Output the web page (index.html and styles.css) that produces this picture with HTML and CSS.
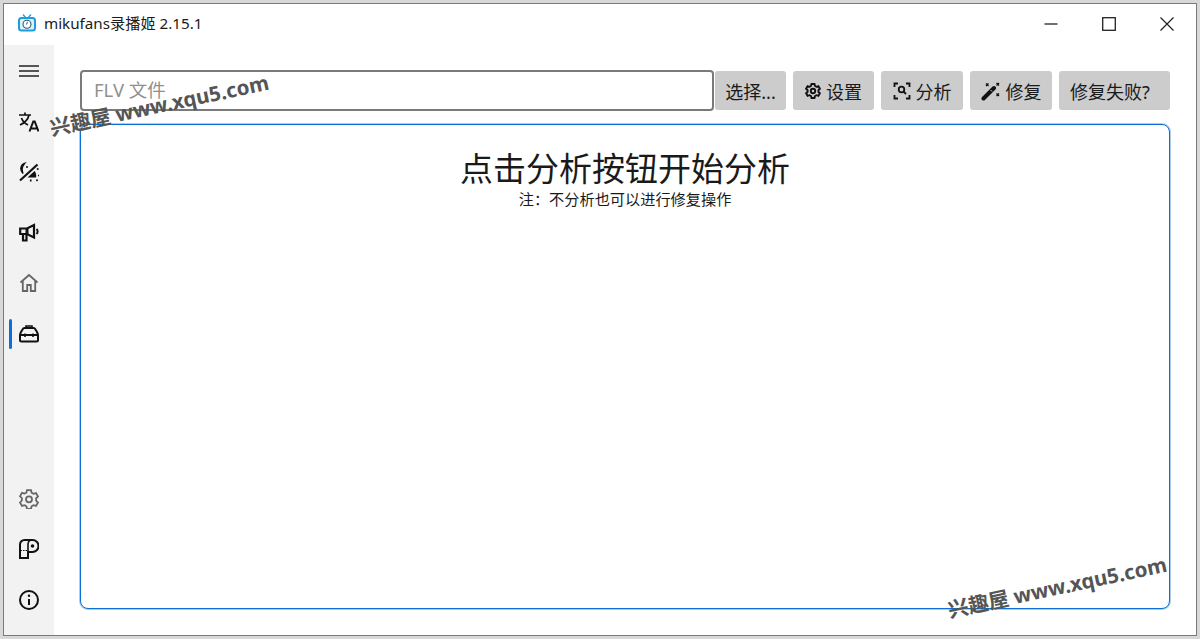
FILE: index.html
```html
<!DOCTYPE html>
<html>

<head>
    <meta charset="UTF-8">
    <link rel="stylesheet" href="styles.css">
    <title>mikufans录播姬 2.15.1</title>
</head>

<body>
    <div class="window">
        <div class="titlebar">
            <svg class="app-icon" viewBox="0 0 18 18" width="18" height="18" fill="none">
                <path d="M5 0.500l3 3.500M13 0.500l-3 3.500" stroke="#2aa3dc" stroke-width="1.400" />
                <rect x="1" y="4" width="16" height="12.500" rx="2.500" fill="#d9f1fb" stroke="#1f9ddb" stroke-width="2" />
                <circle cx="9" cy="10.200" r="4" fill="#fff" stroke="#2c5a70" stroke-width="1.100" />
                <path d="M9.500 7.800L8.500 10.500" stroke="#2c5a70" stroke-width="1" />
            </svg>
            <span class="app-title">mikufans录播姬 2.15.1</span>
            <div class="window-controls">
                <div class="control">
                    <svg viewBox="0 0 14 14" width="14" height="14"><path d="M0.500 7h13" stroke="#222" stroke-width="1.300" /></svg>
                </div>
                <div class="control">
                    <svg viewBox="0 0 14 14" width="14" height="14"><rect x="0.700" y="0.700" width="12.600" height="12.600" fill="none" stroke="#222" stroke-width="1.300" /></svg>
                </div>
                <div class="control">
                    <svg viewBox="0 0 14 14" width="14" height="14"><path d="M0.500 0.500l13 13M13.500 0.500l-13 13" stroke="#222" stroke-width="1.200" /></svg>
                </div>
            </div>
        </div>

        <div class="body">
            <div class="sidebar">
                <div class="nav-group">
                    <div class="nav-item">
                        <svg viewBox="0 0 20 20" width="20" height="20"><path d="M0 5h20M0 10h20M0 15h20" stroke="#222" stroke-width="1.400" /></svg>
                    </div>
                    <div class="nav-item">
                        <svg viewBox="0 0 20 20" width="20" height="20" fill="none" stroke="#111" stroke-width="1.700">
                            <path d="M0 3h12M6 0.500V3M10 3c-1 4.500-4.500 8-9 10M2.500 6c1 3 3.500 5.500 6.500 7" />
                            <path d="M10.500 19.500l3.800-10h1.400l3.800 10M11.800 16.500h6.400" stroke-width="2" />
                        </svg>
                    </div>
                    <div class="nav-item">
                        <svg viewBox="0 0 20 20" width="20" height="20" fill="none" stroke="#111">
                            <path d="M1 18.500L18.500 2.500" stroke-width="2.200" />
                            <path d="M5.500 1.500C1.500 3 0.500 8 4 11.500C2.500 8 3 4.500 5.500 1.500z" stroke-width="1.400" fill="#111" />
                            <circle cx="8" cy="5" r="1" fill="#111" stroke="none" />
                            <path d="M8.500 15.500l7-6.500c1.500 1.500 2 4 1.500 6.500z" fill="#111" stroke="none" />
                            <path d="M18 7.500l1.500-1M19 13.500h1M17.500 17.500l1 1.500M12 17.500l-.5 2" stroke-width="1.600" />
                        </svg>
                    </div>
                </div>
                <div class="nav-group nav-pages">
                    <div class="nav-item">
                        <svg viewBox="0 0 20 20" width="20" height="20" fill="none" stroke="#111" stroke-width="2.200">
                            <path d="M1.200 5.500h6.800l7-3.500v12.500l-7-3.500H1.200z" />
                            <path d="M8 5.500v5.500" stroke-width="3" />
                            <path d="M4 11v6.500h3.500V11" />
                            <path d="M17.500 6c1.500 1.200 1.500 3.800 0 5" stroke-width="2" />
                        </svg>
                    </div>
                    <div class="nav-item">
                        <svg viewBox="0 0 20 20" width="20" height="20" fill="none" stroke="#666" stroke-width="1.800">
                            <path d="M1.500 9.500L10 2l8.500 7.500M3.800 8v10h4.400v-6h3.600v6h4.400V8" />
                        </svg>
                    </div>
                    <div class="nav-item nav-selected">
                        <svg viewBox="0 0 20 20" width="20" height="20" fill="none" stroke="#111" stroke-width="2">
                            <path d="M1 11.500c0-1 .3-2 1-3.500l1.500-2.500c.5-1 1-1.500 2-1.500h9c1 0 1.500.5 2 1.500L18 8c.7 1.500 1 2.500 1 3.500V16a1.500 1.500 0 0 1-1.500 1.500h-15A1.500 1.500 0 0 1 1 16z" />
                            <path d="M1 11h18" />
                            <path d="M7 4V2h6v2" stroke-width="1.600" />
                            <path d="M6 9.500v3.500M14 9.500v3.500" stroke-width="1.600" />
                        </svg>
                    </div>
                </div>
                <div class="nav-group nav-bottom">
                    <div class="nav-item">
                        <svg viewBox="0 0 20 20" width="20" height="20" fill="none" stroke="#666" stroke-width="1.800">
                            <path d="M8 1.200h4l.6 2.500 1.900 1.100 2.500-.7 2 3.400-1.900 1.800v2.400l1.900 1.800-2 3.400-2.500-.7-1.900 1.100-.6 2.500H8l-.6-2.500-1.900-1.100-2.500.7-2-3.400L2.900 11.500V9.100L1 7.300l2-3.400 2.500.7L7.400 3.700z" />
                            <circle cx="10" cy="10.300" r="3" />
                        </svg>
                    </div>
                    <div class="nav-item">
                        <svg viewBox="0 0 20 20" width="20" height="20" fill="none" stroke="#111" stroke-width="2">
                            <path d="M5.500 1h8a5.500 5.500 0 0 1 0 12H9v6H1V5.500A4.500 4.500 0 0 1 5.500 1z" />
                            <path d="M9 13V5.500A4.500 4.500 0 0 1 13 1" stroke-width="1.600" />
                            <circle cx="13.500" cy="7" r="1.800" fill="#111" stroke="none" />
                            <path d="M1.500 11.500h7" stroke-width="1" stroke-dasharray="1.500 1" />
                        </svg>
                    </div>
                    <div class="nav-item">
                        <svg viewBox="0 0 20 20" width="20" height="20" fill="none" stroke="#111" stroke-width="2">
                            <circle cx="10" cy="10" r="9" />
                            <path d="M10 9v6" />
                            <circle cx="10" cy="5.800" r="1.200" fill="#111" stroke="none" />
                        </svg>
                    </div>
                </div>
            </div>

            <div class="main">
                <div class="toolbar">
                    <div class="file-input">FLV 文件</div>
                    <div class="btn btn-select">选择...</div>
                    <div class="btn btn-settings">
                        <svg viewBox="0 0 16 16" width="16" height="16" fill="none" stroke="#111" stroke-width="1.900">
                            <path d="M6.500 1h3l.5 2 1.400.8 2-.6 1.500 2.600-1.500 1.400v1.600l1.500 1.400-1.500 2.600-2-.6-1.400.8-.5 2h-3l-.5-2-1.400-.8-2 .6-1.500-2.600 1.500-1.400V7.200L1.100 5.800l1.500-2.600 2 .6L6 3z" />
                            <circle cx="8" cy="8" r="2.200" />
                        </svg>
                        设置
                    </div>
                    <div class="btn">
                        <svg viewBox="0 0 18 18" width="18" height="18" fill="none" stroke="#111" stroke-width="1.800">
                            <path d="M1.500 5V1.500H5M13 1.500h3.500V5M16.500 13v3.500H13M5 16.500H1.500V13" />
                            <circle cx="8.500" cy="7.500" r="2.800" />
                            <path d="M10.500 9.500l2.500 2.500" />
                        </svg>
                        分析
                    </div>
                    <div class="btn">
                        <svg viewBox="0 0 20 20" width="20" height="20" fill="none" stroke="#111">
                            <path d="M2.500 17.500L13 7" stroke-width="4" stroke-linecap="round" />
                            <path d="M11 10.500l-1.500-1.500" stroke="#ccc" stroke-width="1" />
                            <path d="M5 2.500l2.500 2.500M7.500 2.500L5 5M15.500 2l2.500 2.500M18 2l-2.500 2.500M15.500 12.500l2.500 2.500M18 12.500L15.500 15" stroke-width="1.300" />
                        </svg>
                        修复
                    </div>
                    <div class="btn btn-last">修复失败?</div>
                </div>
                <div class="panel">
                    <div class="panel-title">点击分析按钮开始分析</div>
                    <div class="panel-note">注：不分析也可以进行修复操作</div>
                </div>
            </div>
        </div>

        <div class="watermark watermark-top">兴趣屋 www.xqu5.com</div>
        <div class="watermark watermark-bottom">兴趣屋 www.xqu5.com</div>
    </div>
</body>

</html>
```

FILE: styles.css
```css
* {
    box-sizing: border-box;
}

html,
body {
    height: 100%;
}

body {
    margin: 0;
    padding: 3px;
    background: #d8d8d8;
    font-family: "Noto Sans", "Noto Sans CJK SC", sans-serif;
    color: #1a1a1a;
    overflow: hidden;
}

.window {
    position: relative;
    display: flex;
    flex-direction: column;
    height: 100%;
    background: #fff;
    border: 1px solid #7a7a7a;
    overflow: hidden;
}

.titlebar {
    display: flex;
    align-items: center;
    height: 41px;
    flex-shrink: 0;
    padding-left: 14px;
}

.app-icon {
    margin-right: 8px;
    margin-top: -3px;
}

.app-title {
    font-size: 15.2px;
    margin-top: -5px;
}

.window-controls {
    display: flex;
    margin-left: auto;
    margin-top: -2px;
}

.control {
    display: flex;
    align-items: center;
    justify-content: center;
    width: 58px;
    height: 41px;
}

.body {
    display: flex;
    flex: 1;
    min-height: 0;
}

.sidebar {
    position: relative;
    display: flex;
    flex-direction: column;
    width: 50px;
    background: #f2f2f2;
    padding-top: 1px;
}

.nav-group {
    display: flex;
    flex-direction: column;
}

.nav-pages {
    margin-top: 10px;
}

.nav-bottom {
    margin-top: auto;
    margin-bottom: 10px;
}

.nav-item {
    position: relative;
    display: flex;
    align-items: center;
    justify-content: center;
    height: 50.5px;
}

.nav-selected::before {
    content: "";
    position: absolute;
    left: 5px;
    top: 10px;
    width: 3px;
    height: 30px;
    border-radius: 2px;
    background: #0a6fd6;
}

.main {
    flex: 1;
    min-width: 0;
    padding: 25px 26px 0 26px;
}

.toolbar {
    display: flex;
    align-items: center;
    height: 41px;
}

.file-input {
    flex: 1;
    height: 41px;
    padding: 0 12px;
    line-height: 36px;
    font-size: 18.5px;
    color: #8f8f8f;
    background: #fff;
    border: 2px solid #7a7a7a;
    border-radius: 4px;
}

.btn {
    display: flex;
    align-items: center;
    justify-content: center;
    gap: 5px;
    width: 82px;
    height: 39px;
    margin-left: 7px;
    font-size: 18px;
    background: #cccccc;
    border-radius: 3px;
}

.btn-select {
    width: 71px;
    margin-left: 1px;
}

.btn-settings {
    width: 81px;
}

.btn-last {
    width: 111px;
    padding-left: 11px;
    justify-content: flex-start;
}

.panel {
    height: 485px;
    margin-top: 13px;
    text-align: center;
    background: #fff;
    border: 1px solid #0a6fd6;
    box-shadow: 0 0 0 1px rgba(10, 111, 214, 0.35);
    border-radius: 8px;
    padding-top: 19px;
}

.panel-title {
    font-size: 33px;
    line-height: 50px;
}

.panel-note {
    font-size: 15.2px;
    line-height: 14px;
    margin-top: -2px;
}

.watermark {
    position: absolute;
    font-size: 20.5px;
    font-weight: 700;
    color: #555;
    white-space: nowrap;
    transform: rotate(-12deg);
    transform-origin: left center;
}

.watermark-top {
    left: 46px;
    top: 108px;
}

.watermark-bottom {
    left: 944px;
    top: 590px;
}
```
